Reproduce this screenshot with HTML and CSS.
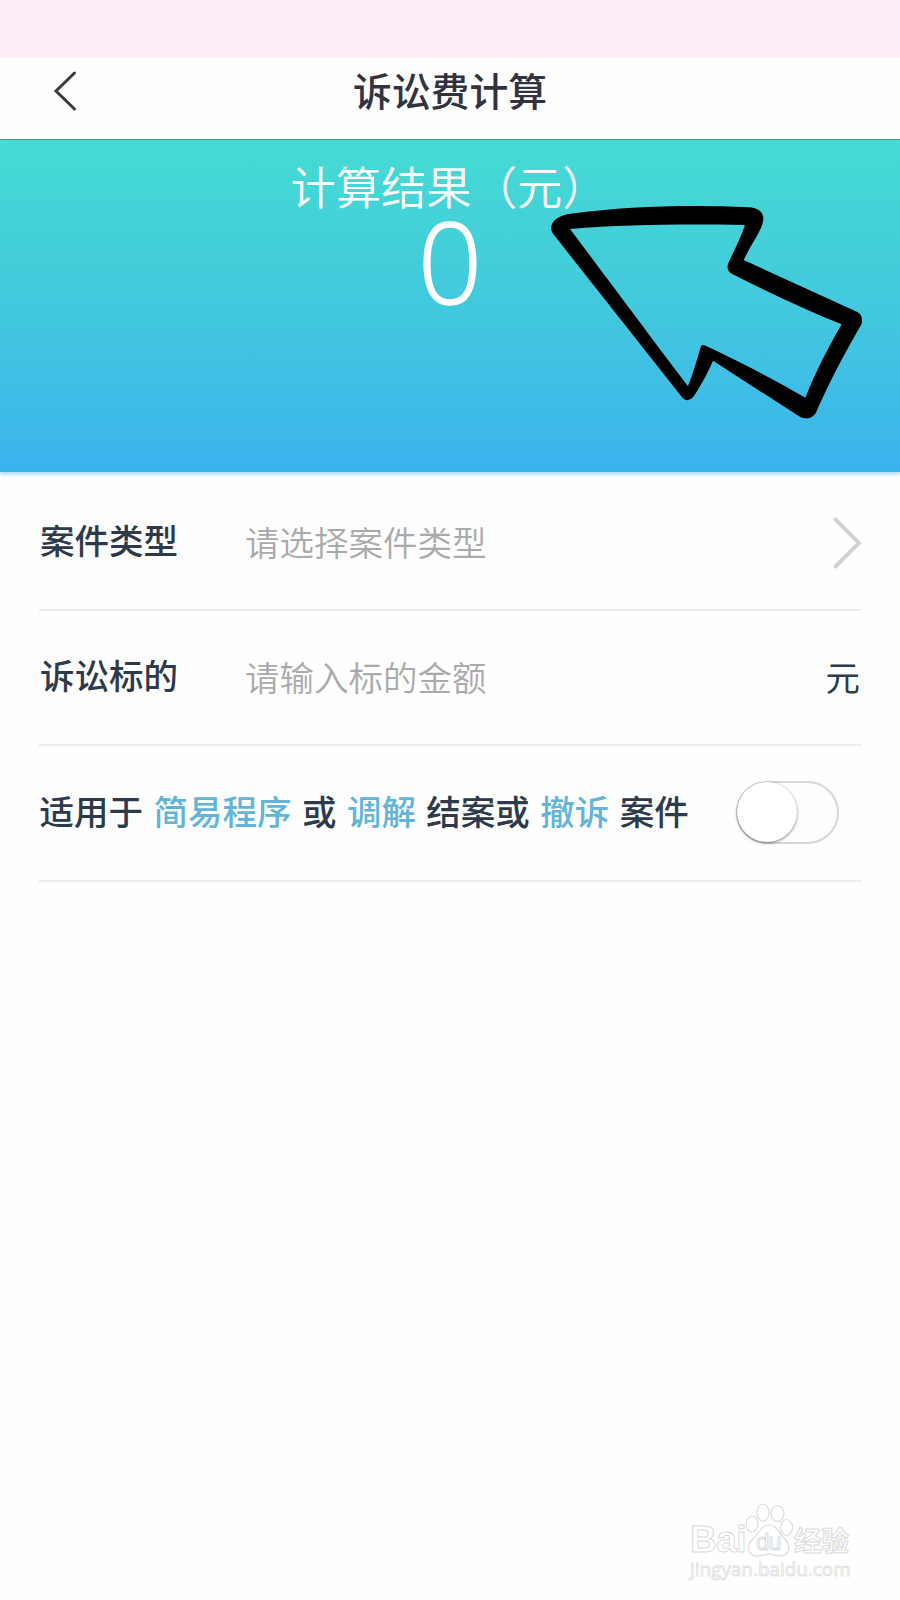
FILE: index.html
```
<!DOCTYPE html>
<html lang="zh-CN">
<head>
  <meta charset="UTF-8">
  <meta name="viewport" content="width=device-width, initial-scale=1.0">
  <title>诉讼费计算</title>
  <link rel="stylesheet" href="styles.css">
</head>
<body>
  <div class="statusbar"></div>

  <header class="header">
    <svg class="back" viewBox="0 0 24 42" width="24" height="42">
      <path d="M21.5 3 L3 21 L21.5 39" />
    </svg>
    <h1>诉讼费计算</h1>
  </header>

  <section class="result">
    <p class="result-label">计算结果（元）</p>
    <p class="result-value">0</p>
    <!-- arrow pointing at the result -->
    <svg class="arrow" viewBox="0 0 1050 780" width="350" height="260">
      <path fill-rule="evenodd" d="M64 150 C58 124 90 104 122 101 C300 78 480 74 655 82 C688 84 704 98 699 124 C696 150 665 190 641 240 L982 396 Q1000 406 995 431 C950 510 910 580 857 700 Q842 722 812 712 L549 542 C528 590 510 620 489 652 Q474 668 458 654 L68 160 Z
        M120 147 C300 132 480 132 645 135 C632 175 610 215 594 252 Q588 273 608 283 C710 334 820 388 935 433 C890 510 858 575 826 653 C730 598 630 545 527 497 Q513 491 511 505 C500 545 487 585 474 619 C350 455 235 300 120 147 Z" />
    </svg>
  </section>

  <main class="form">
    <div class="row">
      <label>案件类型</label>
      <span class="placeholder">请选择案件类型</span>
      <svg class="more" viewBox="0 0 30 56" width="30" height="56">
        <path d="M4.500 5.500 L28 29 L4.500 52.500" />
      </svg>
    </div>
    <div class="row">
      <label>诉讼标的</label>
      <span class="placeholder">请输入标的金额</span>
      <span class="unit">元</span>
    </div>
    <div class="row">
      <p class="apply">适用于 <em>简易程序</em> 或 <em>调解</em> 结案或 <em>撤诉</em> 案件</p>
      <div class="switch"><span class="knob"></span></div>
    </div>
  </main>

  <div class="watermark">
    <div class="brand">
      <span class="bai">Bai</span>
      <span class="paw">
        <svg viewBox="0 0 48 54" width="48" height="54">
          <ellipse cx="7" cy="21" rx="6" ry="8" />
          <ellipse cx="18" cy="9.500" rx="6" ry="8.500" />
          <ellipse cx="32.500" cy="10.500" rx="6.500" ry="8" />
          <ellipse cx="41.500" cy="24.500" rx="6" ry="8" />
          <path d="M24 22 C32 22 34 30 39 35 C47 43 44 53 35 53 C30 53 28 51 24 51 C20 51 17 53 12 53 C3 53 1 42 8 36 C14 31 16 22 24 22 Z" />
        </svg>
        <span class="du">du</span>
      </span>
      <span class="jingyan">经验</span>
    </div>
    <div class="site">jingyan.baidu.com</div>
  </div>
</body>
</html>
```
FILE: styles.css
```
* {
  box-sizing: border-box;
}

body {
  margin: 0;
  height: 1600px;
  position: relative;
  overflow: hidden;
  background: #fefefe;
  color: #2d3a4b;
  font-family: "Noto Sans CJK SC", sans-serif;
}

h1, p {
  margin: 0;
}

.statusbar {
  height: 58px;
  background: #fcecf6;
}

.header {
  position: relative;
  height: 82px;
  border-bottom: 1px solid #4b958f;
}

.header h1 {
  text-align: center;
  font-size: 38.8px;
  font-weight: 500;
  line-height: 63px;
  color: #33333f;
}

.back {
  position: absolute;
  left: 53px;
  top: 12px;
  fill: none;
  stroke: #3a3a40;
  stroke-width: 3;
  stroke-linecap: round;
}

/* result */
.result {
  position: relative;
  height: 332px;
  padding-top: 17px;
  background: linear-gradient(#45dbd3, #42c8de 52%, #3ab3ed);
  box-shadow: 0 2px 4px rgba(58, 179, 237, 0.5);
  color: #fff;
  text-align: center;
}

.result-label {
  margin-left: -2px;
  font-size: 45.300px;
  font-weight: 350;
  line-height: 56px;
}

.result-value {
  font-family: "Open Sans", sans-serif;
  font-size: 113px;
  font-weight: 300;
  line-height: 95px;
  -webkit-text-stroke: 1.5px #fff;
}

.arrow {
  position: absolute;
  left: 530px;
  top: 40px;
  fill: #000;
}

/* form */
.form {
  padding: 3px 39px 0;
}

.row {
  display: flex;
  align-items: center;
  height: 135.500px;
  border-bottom: 2px solid #ececec;
  font-size: 34.500px;
}

.row label {
  width: 206px;
  padding-left: 1px;
  padding-bottom: 6px;
  font-weight: 500;
}

.placeholder {
  flex: 1;
  padding-bottom: 2px;
  color: #aaa;
  font-weight: 350;
}

.more {
  fill: none;
  stroke: #d2d2d2;
  stroke-width: 4;
  stroke-linecap: round;
}

.unit {
  margin-right: 1px;
  padding-bottom: 3px;
}

.apply {
  flex: 1;
  padding-left: 0.5px;
  padding-bottom: 6px;
  font-weight: 500;
  white-space: nowrap;
  word-spacing: 2.700px;
}

.apply em {
  font-style: normal;
  color: #62b5d9;
}

.switch {
  width: 103px;
  height: 63px;
  margin-right: 22px;
  border: 2px solid #d6d6d6;
  border-radius: 32px;
  background: #fdfdfd;
}

.knob {
  display: block;
  width: 60px;
  height: 60px;
  margin-top: -1px;
  margin-left: -1px;
  border-radius: 50%;
  background: #fff;
  box-shadow: 0 1px 3px rgba(0, 0, 0, 0.5);
}

/* watermark */
.watermark {
  position: absolute;
  left: 690px;
  top: 1502px;
  width: 162px;
  color: #fff;
  -webkit-text-stroke: 1px #dadada;
}

.brand {
  display: flex;
  align-items: flex-end;
  height: 55px;
}

.bai {
  width: 55px;
  font: bold 37px/34px "Liberation Sans", sans-serif;
  letter-spacing: -0.5px;
}

.paw {
  position: relative;
  width: 48px;
  height: 54px;
}

.paw svg {
  fill: #fff;
  stroke: #dcdcdc;
  stroke-width: 1.2;
}

.du {
  position: absolute;
  left: 11px;
  top: 25px;
  font: 24px/28px "Liberation Sans", sans-serif;
  letter-spacing: -1px;
}

.jingyan {
  margin-left: 1px;
  font-size: 27.500px;
  font-weight: 700;
  line-height: 36px;
}

.site {
  font: 18.900px/24px "Open Sans", sans-serif;
  -webkit-text-stroke: 0.8px #dedede;
  white-space: nowrap;
}
```
